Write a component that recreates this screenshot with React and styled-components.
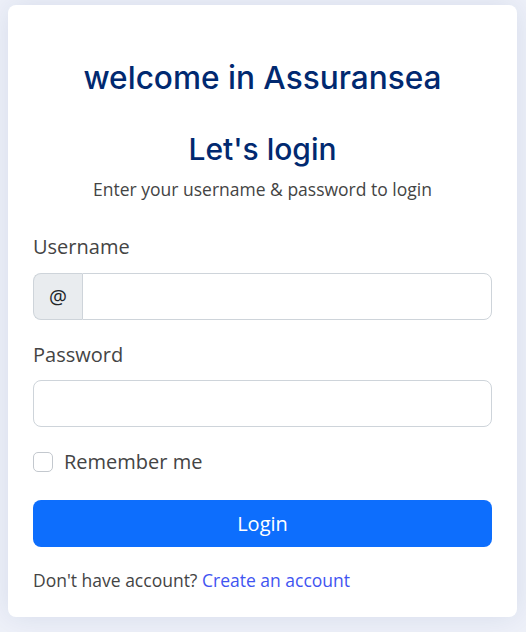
import styled, { createGlobalStyle } from "styled-components";

const GlobalStyle = createGlobalStyle`
    html, body {
        margin: 0;
        padding: 0;
        background: #f0f3fa;
    }
    * {
        box-sizing: border-box;
    }
`

export default function App() {
    return (
        <Page>
            <GlobalStyle />
            <Card>
                <Brand>welcome in Assuransea</Brand>
                <Title>Let's login</Title>
                <Subtitle>Enter your username &amp; password to login</Subtitle>

                <Label htmlFor="username" gap={30}>Username</Label>
                <InputGroup>
                    <Addon>@</Addon>
                    <Input id="username" type="text" grouped />
                </InputGroup>

                <Label htmlFor="password" gap={20}>Password</Label>
                <Input id="password" type="password" />

                <CheckRow>
                    <Checkbox type="checkbox" id="remember" />
                    <CheckLabel htmlFor="remember">Remember me</CheckLabel>
                </CheckRow>

                <LoginButton type="button">Login</LoginButton>

                <Footer>
                    Don't have account? <a href="#">Create an account</a>
                </Footer>
            </Card>
        </Page>
    );
}

const Page = styled.div`
    width: 526px;
    height: 632px;
    padding: 5px 9px 15px 8px;
    background: #eef1f9;
    font-family: 'Open Sans', 'Noto Sans', sans-serif;
    color: #444444;
`

const Card = styled.div`
    width: 509px;
    height: 612px;
    background: #ffffff;
    border-radius: 8px;
    box-shadow: 0px 0 30px rgba(1, 41, 112, 0.1);
    padding: 55px 25px 0 25px;
    display: flex;
    flex-direction: column;
`

const Brand = styled.h1`
    margin: 0;
    text-align: center;
    font-family: 'Inter', 'Noto Sans', sans-serif;
    font-weight: 500;
    font-size: 31.6px;
    line-height: 36px;
    color: #012970;
`

const Title = styled.h2`
    margin: 35px 0 0 0;
    text-align: center;
    font-family: 'Inter', 'Noto Sans', sans-serif;
    font-weight: 500;
    font-size: 30px;
    line-height: 36px;
    color: #012970;
`

const Subtitle = styled.p`
    margin: 9px 0 0 0;
    text-align: center;
    font-size: 17.5px;
    line-height: 26px;
    color: #444444;
`

const Label = styled.label`
    display: block;
    margin-top: ${props => props.gap}px;
    font-size: 20px;
    line-height: 30px;
    color: #444444;
`

const InputGroup = styled.div`
    display: flex;
    margin-top: 11px;
    height: 47px;
    flex-shrink: 0;
`

const Addon = styled.span`
    display: flex;
    align-items: center;
    justify-content: center;
    width: 49px;
    background: #e9ecef;
    border: 1px solid #ced4da;
    border-right: none;
    border-radius: 8px 0 0 8px;
    font-size: 20px;
    color: #212529;
`

const Input = styled.input`
    display: block;
    width: 100%;
    height: 47px;
    flex: ${props => (props.grouped ? "1" : "none")};
    margin: ${props => (props.grouped ? "0" : "10px 0 0 0")};
    border: 1px solid #ced4da;
    border-radius: ${props => (props.grouped ? "0 8px 8px 0" : "8px")};
    background: #ffffff;
    outline: none;
    font-size: 20px;
    padding: 0 15px;
`

const CheckRow = styled.div`
    display: flex;
    align-items: center;
    gap: 11px;
    margin-top: 20px;
    height: 30px;
    flex-shrink: 0;
`

const Checkbox = styled.input`
    appearance: none;
    margin: 0;
    width: 20px;
    height: 20px;
    border: 1px solid #c3c8ce;
    border-radius: 5px;
    background: #ffffff;
`

const CheckLabel = styled.label`
    font-size: 20px;
    line-height: 30px;
    color: #444444;
`

const LoginButton = styled.button`
    margin-top: 23px;
    height: 47px;
    width: 100%;
    flex-shrink: 0;
    border: none;
    border-radius: 8px;
    background: #0d6efd;
    color: #ffffff;
    font-family: 'Open Sans', 'Noto Sans', sans-serif;
    font-size: 20px;
`

const Footer = styled.p`
    margin: 20px 0 0 0;
    font-size: 17.5px;
    line-height: 26px;
    color: #444444;
    a {
        color: #4154f1;
        text-decoration: none;
    }
`
